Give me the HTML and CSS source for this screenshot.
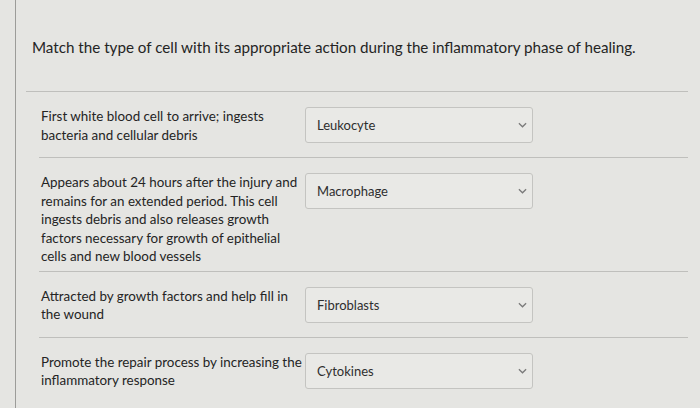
FILE: index.html
```html
<!DOCTYPE html>
<html lang="en">
<head>
<meta charset="utf-8">
<link rel="stylesheet" href="styles.css">
</head>
<body>
<div class="frame">
  <div class="question">
    <p class="title">Match the type of cell with its appropriate action during the inflammatory phase of healing.</p>
  </div>
  <div class="rows">
    <div class="row">
      <div class="prompt">First white blood cell to arrive; ingests bacteria and cellular debris</div>
      <div class="select"><span>Leukocyte</span><svg class="chev" viewBox="0 0 10 6" width="9" height="6"><path d="M1 1 L5 5 L9 1" fill="none" stroke="#7a7a7a" stroke-width="1.4"/></svg></div>
    </div>
    <div class="row">
      <div class="prompt">Appears about 24 hours after the injury and remains for an extended period. This cell ingests debris and also releases growth factors necessary for growth of epithelial cells and new blood vessels</div>
      <div class="select"><span>Macrophage</span><svg class="chev" viewBox="0 0 10 6" width="9" height="6"><path d="M1 1 L5 5 L9 1" fill="none" stroke="#7a7a7a" stroke-width="1.4"/></svg></div>
    </div>
    <div class="row">
      <div class="prompt">Attracted by growth factors and help fill in the wound</div>
      <div class="select"><span>Fibroblasts</span><svg class="chev" viewBox="0 0 10 6" width="9" height="6"><path d="M1 1 L5 5 L9 1" fill="none" stroke="#7a7a7a" stroke-width="1.4"/></svg></div>
    </div>
    <div class="row last">
      <div class="prompt">Promote the repair process by increasing the inflammatory response</div>
      <div class="select"><span>Cytokines</span><svg class="chev" viewBox="0 0 10 6" width="9" height="6"><path d="M1 1 L5 5 L9 1" fill="none" stroke="#7a7a7a" stroke-width="1.4"/></svg></div>
    </div>
  </div>
</div>
</body>
</html>
```

FILE: styles.css
```css
html, body {
  margin: 0;
  padding: 0;
  background: #e5e5e2;
  font-family: Lato, "Liberation Sans", sans-serif;
  color: #242424;
}
.frame {
  margin-left: 15px;
  border-left: 1px solid #9c9c99;
  min-height: 408px;
  box-sizing: border-box;
  padding-right: 12px;
}
.question {
  margin-left: 10px;
  border-bottom: 1px solid #bfbfbc;
  height: 92px;
  box-sizing: border-box;
  padding-top: 37px;
}
.title {
  margin: 0;
  padding-left: 6px;
  font-size: 15.2px;
  line-height: 20px;
}
.rows {
  margin-left: 23px;
}
.row {
  display: flex;
  align-items: flex-start;
  padding: 15px 0 5px;
  border-bottom: 1px solid #bfbfbc;
}
.row.last {
  border-bottom: none;
}
.prompt {
  width: 266px;
  padding-left: 2px;
  box-sizing: border-box;
  font-size: 13.4px;
  line-height: 18.5px;
}
.select {
  width: 228px;
  height: 36px;
  margin-bottom: 9px;
  box-sizing: border-box;
  border: 1px solid #c4c4c1;
  border-radius: 3px;
  background: #e9e9e6;
  display: flex;
  align-items: center;
  justify-content: space-between;
  padding: 0 5px 0 11px;
  font-size: 13px;
  color: #2e2e2e;
}
.chev {
  display: block;
}
```
